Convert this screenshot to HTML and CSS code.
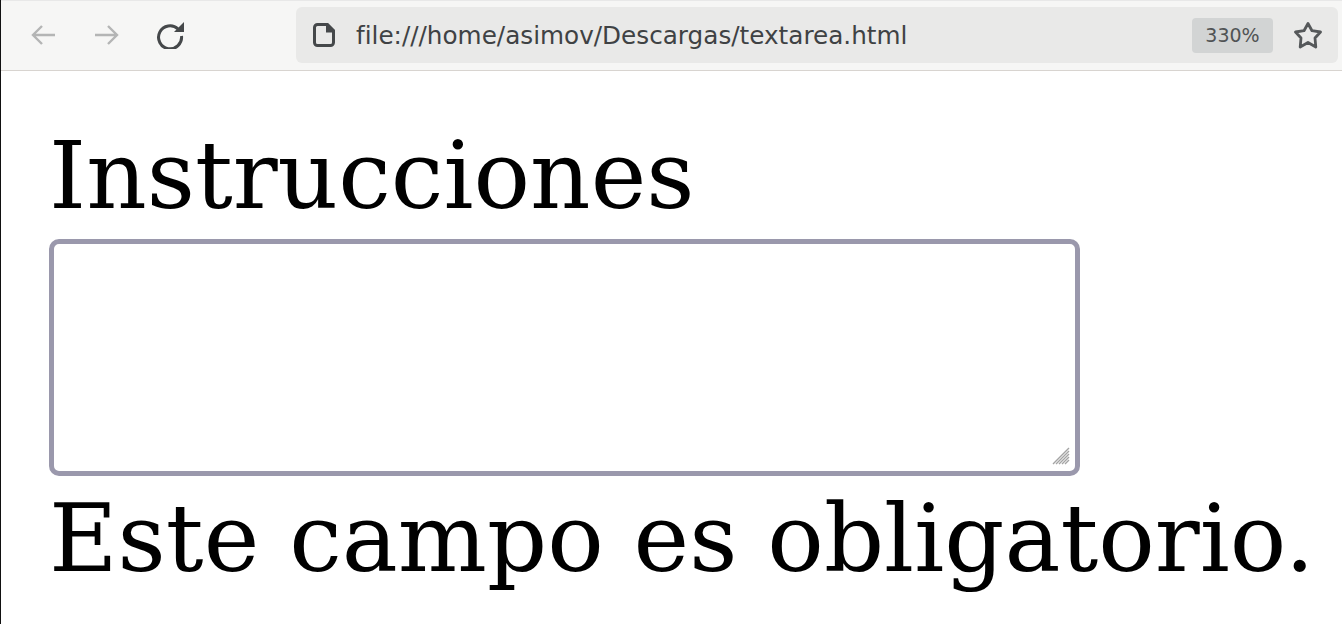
FILE: index.html
```html
<!DOCTYPE html>
<html lang="es">
<head>
    <meta charset="UTF-8">
    <title>textarea.html</title>
    <link rel="stylesheet" href="styles.css">
</head>
<body>

    <div class="toolbar">
        <div class="nav">
            <svg class="icon" viewBox="0 0 28 28"><path class="disabled" d="M26 14H4M13 5l-9 9 9 9"/></svg>
            <svg class="icon" viewBox="0 0 28 28"><path class="disabled" d="M2 14h22M15 5l9 9-9 9"/></svg>
            <svg class="icon" viewBox="0 0 28 28"><path class="reload" d="M21 8a11.500 11.500 0 1 0 3.500 7"/><path class="solid" d="M17 11h10V1z"/></svg>
        </div>
        <div class="urlbar">
            <svg class="page-icon" viewBox="0 0 22 26"><path class="page-line" d="M5 2.500h9l6.500 6.500v11.500a3 3 0 0 1-3 3h-13a3 3 0 0 1-3-3v-15a3 3 0 0 1 3-3z"/><path class="solid" d="M13 1h2l7 7v2.500h-9z"/></svg>
            <span class="url">file:///home/asimov/Descargas/textarea.html</span>
            <span class="zoom-badge">330%</span>
            <svg class="star" viewBox="0 0 30 30"><path class="star-line" d="M14 3.500l4 7.200 8.500 1.300-5.500 6 .8 9-7.800-4.500-7.800 4.500.8-9-5.500-6 8.500-1.300z"/></svg>
        </div>
    </div>

    <div class="contenido">
        <label class="etiqueta" for="instrucciones">Instrucciones</label>
        <div class="campo">
            <textarea id="instrucciones" class="area"></textarea>
            <svg class="grip" viewBox="0 0 18 18"><path d="M17 1L1 17M17 4L4 17M17 7L7 17M17 10l-7 7M17 13l-4 4"/></svg>
        </div>
        <div class="etiqueta">Este campo es obligatorio.</div>
    </div>

</body>
</html>
```

FILE: styles.css
```css
html, body {
    height: 100%;
}

body {
    margin: 0;
    background: white;
    color: black;
    border-left: 1px solid #111;
    box-sizing: border-box;
    overflow: hidden;
}

.toolbar {
    height: 68px;
    display: flex;
    align-items: center;
    gap: 22px;
    padding: 0 4px 1px 28px;
    background: #f6f6f5;
    border-top: 1px solid #e8e8e8;
    border-bottom: 1px solid #d8d4d0;
}

.nav {
    display: flex;
    align-items: center;
    gap: 36px;
    margin-right: 89px;
}

.icon {
    width: 28px;
    height: 28px;
    fill: none;
}

.disabled {
    fill: none;
    stroke: #b4b5b5;
    stroke-width: 2.400;
}

.reload {
    fill: none;
    stroke: #45484a;
    stroke-width: 3;
}

.page-line {
    fill: none;
    stroke: #45484a;
    stroke-width: 3;
}

.solid {
    fill: #45484a;
}

.urlbar {
    flex: 1;
    height: 56px;
    display: flex;
    align-items: center;
    background: #e9e9e8;
    border-radius: 6px;
    padding: 0 14px 0 17px;
}

.page-icon {
    width: 22px;
    height: 26px;
    flex: none;
}

.url {
    flex: 1;
    margin-left: 21px;
    font-family: "DejaVu Sans", sans-serif;
    font-size: 24.700px;
    color: #3f4244;
}

.zoom-badge {
    width: 81px;
    height: 35px;
    line-height: 35px;
    text-align: center;
    border-radius: 4px;
    background: #d2d4d4;
    font-family: "DejaVu Sans", sans-serif;
    font-size: 19px;
    color: #505355;
}

.star {
    width: 30px;
    height: 30px;
    margin-left: 21px;
    flex: none;
}

.star-line {
    fill: none;
    stroke: #55585a;
    stroke-width: 2.800;
    stroke-linejoin: round;
}

.contenido {
    padding: 42px 0 0 48px;
    font-family: "DejaVu Serif", serif;
    font-size: 94px;
    white-space: nowrap;
}

.etiqueta {
    display: block;
    line-height: 126px;
}

.campo {
    position: relative;
    width: 1031px;
    height: 237px;
}

.area {
    display: block;
    width: 100%;
    height: 100%;
    box-sizing: border-box;
    margin: 0;
    padding: 0;
    background: white;
    border: 5px solid #9a98ac;
    border-radius: 10px;
    outline: none;
    resize: none;
}

/* agarre de redimensionar */
.grip {
    position: absolute;
    right: 10px;
    bottom: 11px;
    width: 18px;
    height: 18px;
    fill: none;
    stroke: #a4a4a4;
    stroke-width: 1.400;
}
```
